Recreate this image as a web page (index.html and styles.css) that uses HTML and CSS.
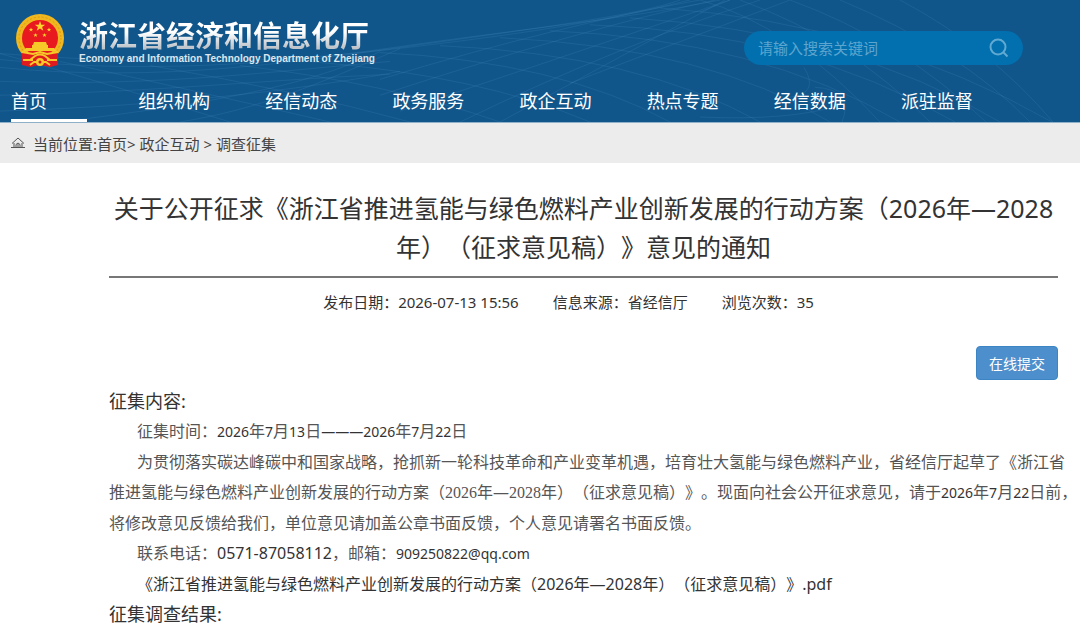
FILE: index.html
```
<!DOCTYPE html>
<html lang="zh-CN">
<head>
    <meta charset="UTF-8">
    <meta name="viewport" content="width=device-width, initial-scale=1">
    <title>浙江省经济和信息化厅</title>
    <link rel="stylesheet" href="styles.css">
</head>
<body>
<header class="header">
    <svg class="waves" viewBox="0 0 1080 123" preserveAspectRatio="none" aria-hidden="true">
        <path d="M0 54C110 62 230 68 380 51S610 20 690 0M0 60C140 74 270 66 400 47S620 20 720 0M0 68C160 84 300 62 420 45S640 15 680 0"/>
        <path d="M0 82C160 88 290 70 390 62M0 96C170 92 270 80 390 75M0 112C120 108 260 98 400 72M60 123C200 105 300 90 380 52M180 123C260 110 320 84 400 49"/>
        <path d="M380 80Q560 25 700 0M380 96Q580 30 715 0M400 112Q600 45 730 0M460 123Q620 45 760 0M500 123L725 0M570 84L790 0"/>
        <path d="M0 54Q100 82 230 123M60 62Q180 88 330 123M150 66Q290 90 410 123M240 66Q390 84 500 123M310 62Q480 76 590 123"/>
        <path d="M380 53Q560 62 670 123M440 46Q640 55 760 123M500 38Q710 48 830 123M550 31Q760 40 900 123M590 25Q800 32 955 123M630 18Q850 32 1000 123M660 8Q880 24 1052 123"/>
        <path d="M700 0Q790 25 880 123M740 0Q850 40 930 123M790 0Q900 40 986 123M840 0Q960 50 1030 123M900 0Q990 48 1053 123"/>
        <path d="M700 12L730 0M804 68Q820 94 790 98M700 118Q790 122 840 106M842 123Q855 90 815 88"/>
    </svg>
    <div class="header-top">
        <a class="brand" href="#">
            <svg class="emblem" viewBox="0 0 48 54" aria-hidden="true">
                <path fill="#d71920" d="M6 35h36v14l-8 4-10-2-10 2-8-4z"/>
                <circle cx="24" cy="24" r="24" fill="#f0b81e"/>
                <circle cx="24" cy="24" r="21" fill="none" stroke="#d99a16" stroke-width="1" stroke-dasharray="2 2"/>
                <circle cx="24" cy="24" r="18" fill="#e8191f"/>
                <path fill="#ffd52b" d="M24 7l1.300 3.700h3.900l-3.100 2.300 1.200 3.800-3.300-2.300-3.300 2.300 1.200-3.800-3.100-2.300h3.900z"/>
                <path fill="#ffd52b" d="M15 13.500l.6 1.500h1.600l-1.300 1 .5 1.600-1.400-1-1.400 1 .5-1.600-1.300-1h1.600zM33 13.500l.6 1.500h1.600l-1.300 1 .5 1.600-1.400-1-1.400 1 .5-1.600-1.300-1h1.600zM19.500 19l.6 1.500h1.600l-1.300 1 .5 1.600-1.400-1-1.400 1 .5-1.600-1.300-1h1.600zM28.500 19l.6 1.500h1.600l-1.300 1 .5 1.600-1.400-1-1.400 1 .5-1.600-1.300-1h1.600z"/>
                <path fill="#f6c928" d="M18 28h12l1 3H17zM16 31h16v3H16zM10 34h28l3 3H7z"/>
                <path fill="#e01b20" d="M6 38h36v13l-8 2-6-3h-8l-6 3-8-2z"/>
                <path fill="none" stroke="#f6c928" stroke-width="2" d="M6 38l11 2 7-2 7 2 11-2M14 46l5-4q5-3 10 0l5 4M7 46h10M31 46h10M14 51l4-3h12l4 3"/>
                <circle cx="24" cy="48" r="4" fill="#f6c928"/>
                <circle cx="24" cy="48" r="1.500" fill="#d71920"/>
            </svg>
            <span class="brand-text">
                <span class="brand-cn">浙江省经济和信息化厅</span>
                <span class="brand-en">Economy and Information Technology Department of Zhejiang</span>
            </span>
        </a>
        <form class="search" role="search">
            <input type="text" name="q" placeholder="请输入搜索关键词" aria-label="请输入搜索关键词">
            <button type="submit" aria-label="搜索">
                <svg viewBox="0 0 20 20" width="20" height="20"><circle cx="9" cy="9" r="7.500"/><path d="M14.300 14.300L18.500 18.500"/></svg>
            </button>
        </form>
    </div>
    <nav class="nav">
        <a class="active" href="#">首页</a>
        <a href="#">组织机构</a>
        <a href="#">经信动态</a>
        <a href="#">政务服务</a>
        <a href="#">政企互动</a>
        <a href="#">热点专题</a>
        <a href="#">经信数据</a>
        <a href="#">派驻监督</a>
    </nav>
</header>

<div class="crumbs">
    <svg viewBox="0 0 14 12" width="14" height="12" aria-hidden="true"><path d="M1 6.500L7 1l6 5.500M3 6v4M11 6v4M0 10.500h14M5 10V7.500Q7 4.500 9 7.500V10M7 7v3"/></svg>
    <span>当前位置:<a href="#">首页</a>&gt; <a href="#">政企互动</a> &gt; <a href="#">调查征集</a></span>
</div>

<main class="article">
    <h1>关于公开征求《浙江省推进氢能与绿色燃料产业创新发展的行动方案（2026年—2028年）（征求意见稿）》意见的通知</h1>
    <div class="meta">
        <span>发布日期：2026-07-13 15:56</span>
        <span>信息来源：省经信厅</span>
        <span>浏览次数：35</span>
    </div>
    <div class="actions">
        <button type="button" class="btn">在线提交</button>
    </div>
    <h2>征集内容:</h2>
    <div class="content">
        <p>征集时间：<span class="num">2026</span>年<span class="num">7</span>月<span class="num">13</span>日<span class="num">———2026</span>年<span class="num">7</span>月<span class="num">22</span>日</p>
        <p>为贯彻落实碳达峰碳中和国家战略，抢抓新一轮科技革命和产业变革机遇，培育壮大氢能与绿色燃料产业，省经信厅起草了《浙江省推进氢能与绿色燃料产业创新发展的行动方案（<span class="song">2026</span>年—<span class="song">2028</span>年）（征求意见稿）》。现面向社会公开征求意见，请于<span class="num">2026</span>年<span class="num">7</span>月<span class="num">22</span>日前，将修改意见反馈给我们，单位意见请加盖公章书面反馈，个人意见请署名书面反馈。</p>
        <p>联系电话：<span class="tel">0571-87058112</span>，邮箱：<span class="num">909250822@qq.com</span></p>
    </div>
    <a class="file" href="#">《浙江省推进氢能与绿色燃料产业创新发展的行动方案（2026年—2028年）（征求意见稿）》.pdf</a>
    <h2>征集调查结果:</h2>
</main>
</body>
</html>
```
FILE: styles.css
```
*{
    box-sizing: border-box;
}
body{
    margin: 0;
    background: #fff;
    color: #333;
    font-family: "Noto Sans", "Noto Sans CJK SC", sans-serif;
    font-size: 15px;
    text-spacing-trim: space-all;
}
a{
    color: inherit;
    text-decoration: none;
}
h1, h2, p{
    margin: 0;
    font-weight: normal;
}

/* header */
.header{
    position: relative;
    background: #11568b;
    border-bottom: 1px solid #8fb0c9;
}
.waves{
    position: absolute;
    inset: 0;
    width: 100%;
    height: 100%;
    fill: none;
    stroke: #5aa0d0;
    stroke-opacity: .16;
}
.header-top{
    position: relative;
    display: flex;
    justify-content: space-between;
    align-items: flex-start;
    padding: 14px 57px 0 16px;
    height: 84px;
}
.brand{
    display: flex;
    align-items: flex-start;
    gap: 15px;
}
.emblem{
    width: 48px;
    height: 54px;
}
.brand-text{
    display: flex;
    flex-direction: column;
    padding-top: 1px;
}
.brand-cn{
    font: bold 29px/38px "Noto Sans CJK SC", sans-serif;
    color: transparent;
    background: linear-gradient(#fff 45%, #bfc5ca 85%);
    background-clip: text;
    -webkit-background-clip: text;
}
.brand-en{
    font: bold 10px/12px "Liberation Sans", sans-serif;
    color: #dde6ee;
}
.search{
    display: flex;
    align-items: center;
    width: 279px;
    height: 34px;
    margin-top: 17px;
    padding: 0 14px;
    border-radius: 17px;
    background: #026fae;
}
.search input{
    flex: 1;
    min-width: 0;
    padding: 0;
    border: 0;
    outline: 0;
    background: none;
    color: #fff;
    font: inherit;
}
.search input::placeholder{
    color: #5da5cf;
}
.search button{
    display: flex;
    padding: 0;
    border: 0;
    background: none;
    cursor: pointer;
}
.search svg{
    fill: none;
    stroke: #5fa9d2;
    stroke-width: 2;
}
.nav{
    position: relative;
    display: grid;
    grid-template-columns: repeat(8, 1fr);
    padding: 0 52px 0 11px;
    color: #fff;
    font-size: 18px;
    line-height: 35px;
}
.nav a{
    width: 76px;
    white-space: nowrap;
    border-bottom: 3px solid transparent;
}
.nav .active{
    border-color: #fff;
}

/* breadcrumb */
.crumbs{
    display: flex;
    align-items: center;
    gap: 8px;
    height: 40px;
    padding: 0 11px;
    background: #ececec;
    color: #444;
}
.crumbs svg{
    fill: none;
    stroke: #555;
}

/* article */
.article{
    padding: 26px 22px 10px 109px;
}
.article h1{
    padding-bottom: 9px;
    border-bottom: 2px solid #777;
    font-size: 25px;
    line-height: 39px;
    text-align: center;
}
.meta{
    display: flex;
    justify-content: center;
    gap: 34px;
    padding: 12px 30px 0 0;
    line-height: 24px;
}
.actions{
    display: flex;
    justify-content: flex-end;
    margin: 32px 0 6px;
}
.btn{
    height: 34px;
    padding: 0 12px;
    border: 1px solid #3c85c4;
    border-radius: 4px;
    background: #4c8fcc;
    color: #fff;
    font: 14px "Noto Sans CJK SC", sans-serif;
    cursor: pointer;
}
.article h2{
    font-size: 18px;
    line-height: 30px;
}
/* body copy runs out over the right padding */
.content{
    margin-right: -22px;
    color: #555;
    font-size: 16px;
    font-weight: 300;
    line-height: 30px;
}
.content p{
    text-indent: 28px;
}
.num, .tel{
    color: #333;
    font-weight: 400;
}
.num{
    font-size: 14px;
}
.song{
    font-family: "Liberation Serif", serif;
}
.file{
    display: block;
    padding-left: 28px;
    font-size: 16px;
    line-height: 30px;
}
```
